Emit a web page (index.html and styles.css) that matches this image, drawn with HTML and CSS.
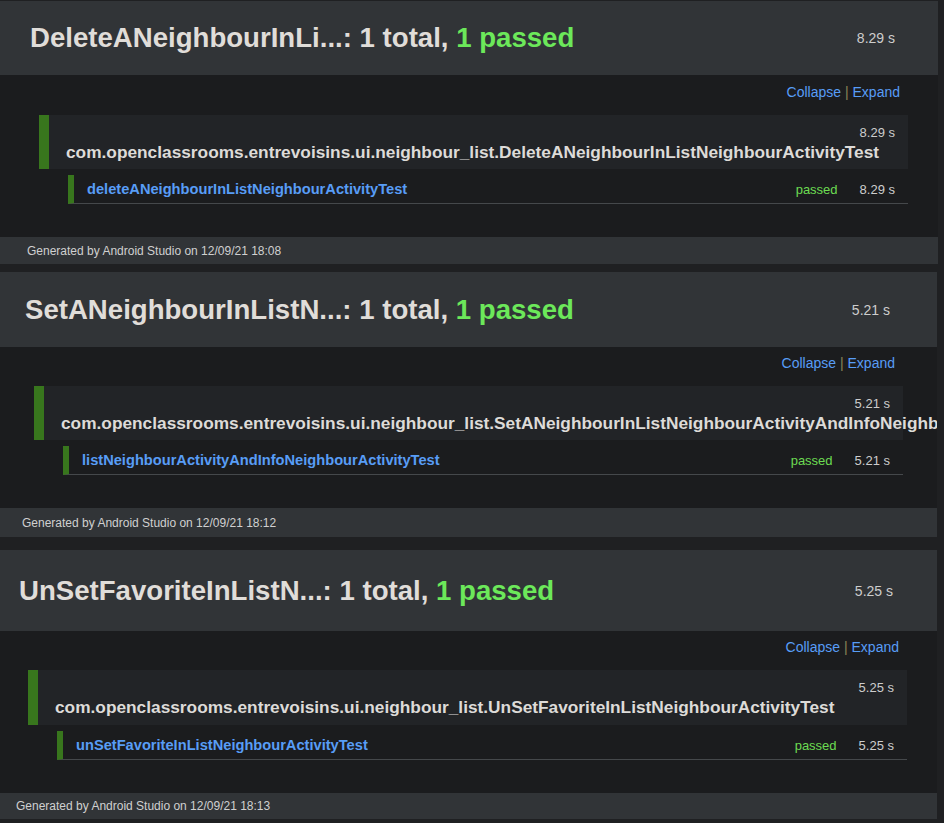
FILE: index.html
```html
<!DOCTYPE html>
<html lang="en">
<head>
<meta charset="utf-8">
<title>Test reports</title>
<link rel="stylesheet" href="styles.css">
</head>
<body>
<section class="report r1">
  <div class="inner">
    <header class="head">
      <h1 class="title">DeleteANeighbourInLi...: 1 total, <span class="ok">1 passed</span></h1>
      <span class="dur">8.29 s</span>
    </header>
    <div class="body">
      <div class="toggles"><a class="link" href="#">Collapse</a> <span class="sep">|</span> <a class="link" href="#">Expand</a></div>
      <div class="cls">
        <div class="cls-time">8.29 s</div>
        <div class="cls-name">com.openclassrooms.entrevoisins.ui.neighbour_list.DeleteANeighbourInListNeighbourActivityTest</div>
      </div>
      <div class="test">
        <span class="test-name">deleteANeighbourInListNeighbourActivityTest</span>
        <span class="status">passed</span>
        <span class="test-time">8.29 s</span>
      </div>
    </div>
    <footer class="foot">Generated by Android Studio on 12/09/21 18:08</footer>
  </div>
</section>

<section class="report r2">
  <div class="inner">
    <header class="head">
      <h1 class="title">SetANeighbourInListN...: 1 total, <span class="ok">1 passed</span></h1>
      <span class="dur">5.21 s</span>
    </header>
    <div class="body">
      <div class="toggles"><a class="link" href="#">Collapse</a> <span class="sep">|</span> <a class="link" href="#">Expand</a></div>
      <div class="cls">
        <div class="cls-time">5.21 s</div>
        <div class="cls-name">com.openclassrooms.entrevoisins.ui.neighbour_list.SetANeighbourInListNeighbourActivityAndInfoNeighbourActivityTest</div>
      </div>
      <div class="test">
        <span class="test-name">listNeighbourActivityAndInfoNeighbourActivityTest</span>
        <span class="status">passed</span>
        <span class="test-time">5.21 s</span>
      </div>
    </div>
    <footer class="foot">Generated by Android Studio on 12/09/21 18:12</footer>
  </div>
</section>

<section class="report r3">
  <div class="inner">
    <header class="head">
      <h1 class="title">UnSetFavoriteInListN...: 1 total, <span class="ok">1 passed</span></h1>
      <span class="dur">5.25 s</span>
    </header>
    <div class="body">
      <div class="toggles"><a class="link" href="#">Collapse</a> <span class="sep">|</span> <a class="link" href="#">Expand</a></div>
      <div class="cls">
        <div class="cls-time">5.25 s</div>
        <div class="cls-name">com.openclassrooms.entrevoisins.ui.neighbour_list.UnSetFavoriteInListNeighbourActivityTest</div>
      </div>
      <div class="test">
        <span class="test-name">unSetFavoriteInListNeighbourActivityTest</span>
        <span class="status">passed</span>
        <span class="test-time">5.25 s</span>
      </div>
    </div>
    <footer class="foot">Generated by Android Studio on 12/09/21 18:13</footer>
  </div>
</section>
</body>
</html>
```

FILE: styles.css
```css
html, body {
  margin: 0;
  padding: 0;
}

body {
  background: #1f2022;
  font-family: "Liberation Sans", Arial, sans-serif;
  color: #cfcfcf;
  height: 823px;
  overflow: hidden;
}

.report {
  width: 937px;
  overflow: hidden;
}

.inner {
  margin-left: var(--shift);
  width: var(--w);
}

.r1 {
  --shift: 0px;
  --w: 938px;
  --hh: 74px;
  --hpr: 43px;
  --pr: 30px;
  --pt: 9px;
  --ch: 54px;
  --fh: 27px;
  width: 938px;
  margin-top: 1px;
}

.r2 {
  --shift: -5px;
  --w: 942px;
  --hh: 75px;
  --hpr: 47px;
  --pr: 34px;
  --pt: 8px;
  --ch: 54px;
  --fh: 29px;
  margin-top: 8px;
}

.r3 {
  --shift: -11px;
  --w: 948px;
  --hh: 81px;
  --hpr: 44px;
  --pr: 30px;
  --pt: 8px;
  --ch: 55px;
  --fh: 26px;
  margin-top: 13px;
}

/* header */
.head {
  box-sizing: border-box;
  height: var(--hh);
  display: flex;
  align-items: center;
  justify-content: space-between;
  padding: 0 var(--hpr) 0 30px;
  background: #313437;
}

.title {
  margin: 0;
  font-size: 27.6px;
  font-weight: bold;
  color: #e0ddd9;
  white-space: nowrap;
  line-height: 32px;
}

.ok {
  color: #6ce85a;
}

.dur {
  font-size: 14px;
  color: #cdcdcd;
}

/* body */
.body {
  background: #1b1c1e;
  padding: var(--pt) var(--pr) 33px 39px;
}

.toggles {
  text-align: right;
  padding-right: 8px;
  font-size: 14px;
  line-height: 16px;
}

.link {
  color: #589df6;
  text-decoration: none;
}

.sep {
  color: #8a8458;
}

.cls {
  box-sizing: border-box;
  margin-top: 15px;
  height: var(--ch);
  border-left: 10px solid #38761d;
  background: #222427;
  padding: 10px 13px 0 17px;
}

.cls-time {
  text-align: right;
  font-size: 13px;
  line-height: 16px;
  color: #cdcdcd;
}

.cls-name {
  margin-top: 1px;
  font-size: 17.3px;
  line-height: 20px;
  font-weight: bold;
  color: #dddbd8;
  white-space: nowrap;
}

.test {
  box-sizing: border-box;
  margin-top: 6px;
  margin-left: 29px;
  height: 29px;
  display: flex;
  align-items: center;
  border-left: 6px solid #38761d;
  border-bottom: 1px solid #45484b;
  padding: 0 13px 0 13px;
}

.test-name {
  flex: 1;
  font-size: 14.65px;
  font-weight: bold;
  color: #589df6;
  white-space: nowrap;
}

.status {
  font-size: 13px;
  color: #6cdc52;
  margin-right: 22px;
}

.test-time {
  font-size: 13px;
  color: #cdcdcd;
}

/* footer */
.foot {
  box-sizing: border-box;
  height: var(--fh);
  display: flex;
  align-items: center;
  padding-left: 27px;
  font-size: 12px;
  color: #d0d0d0;
  background: #313437;
}
```
